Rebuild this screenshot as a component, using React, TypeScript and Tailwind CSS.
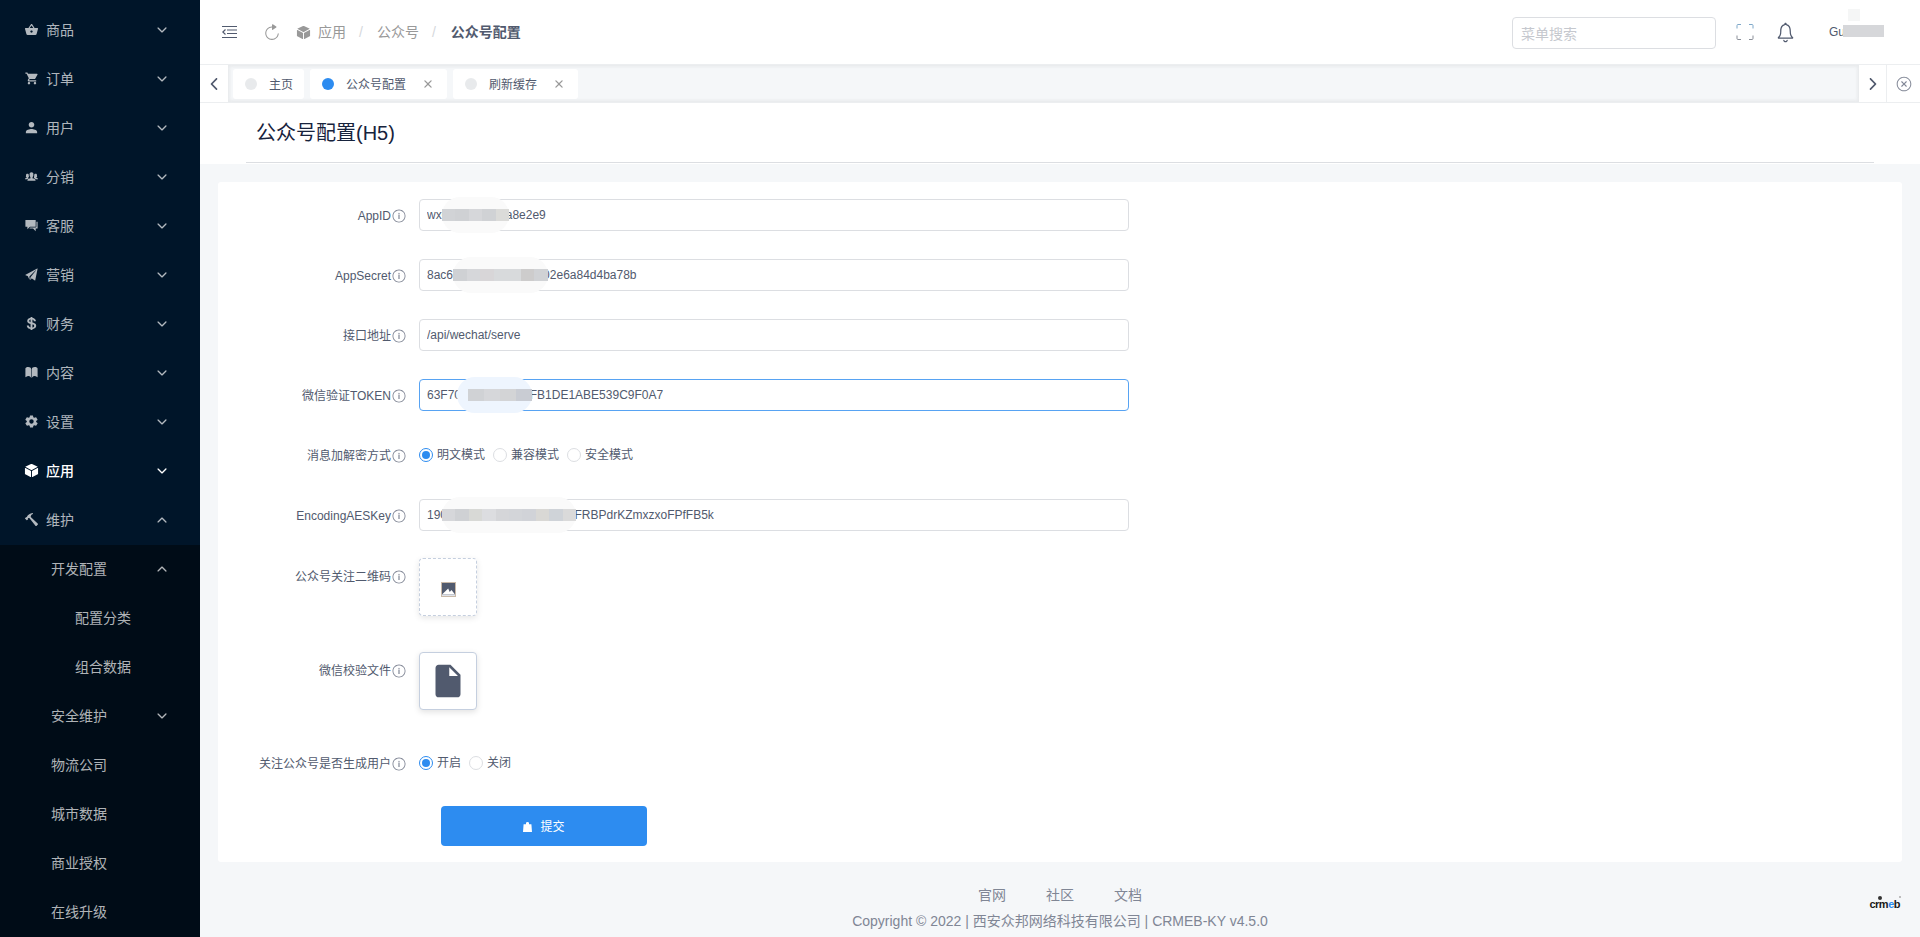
import type { ReactNode } from 'react';
import {
  IoIosArrowBack,
  IoIosArrowDown,
  IoIosArrowForward,
  IoIosArrowUp,
  IoIosBook,
  IoIosClose,
  IoIosCloseCircleOutline,
  IoIosInformationCircleOutline,
  IoIosNotificationsOutline,
  IoIosPaperPlane,
  IoIosPeople,
  IoIosRefresh,
  IoLogoUsd,
  IoMdBasket,
  IoMdCart,
  IoMdChatboxes,
  IoMdCube,
  IoMdDocument,
  IoMdHammer,
  IoMdPerson,
  IoMdSettings,
} from 'react-icons/io';

const topMenu = [
  { name: '商品', icon: IoMdBasket },
  { name: '订单', icon: IoMdCart },
  { name: '用户', icon: IoMdPerson },
  { name: '分销', icon: IoIosPeople },
  { name: '客服', icon: IoMdChatboxes },
  { name: '营销', icon: IoIosPaperPlane },
  { name: '财务', icon: IoLogoUsd },
  { name: '内容', icon: IoIosBook },
  { name: '设置', icon: IoMdSettings },
];

const subMenu = ['物流公司', '城市数据', '商业授权', '在线升级'];

function MenuRow({ icon: Icon, name, active, open }: { icon: typeof IoMdCube; name: string; active?: boolean; open?: boolean }) {
  const Arrow = open ? IoIosArrowUp : IoIosArrowDown;
  return (
    <div className={`flex h-[49px] shrink-0 items-center pb-[2px] pl-[24px] pr-[31px] text-sm ${active ? 'text-white font-medium' : 'text-white/70'}`}>
      <Icon className="mr-[7px] h-[15px] w-[15px]" />
      <span className="flex-1">{name}</span>
      <Arrow className="h-[14px] w-[14px]" />
    </div>
  );
}

function Sidebar() {
  return (
    <aside className="flex h-[937px] w-[200px] shrink-0 flex-col overflow-hidden bg-[#001529] pt-[6px]">
      {topMenu.map((m) => (
        <MenuRow key={m.name} icon={m.icon} name={m.name} />
      ))}
      <MenuRow icon={IoMdCube} name="应用" active />
      <MenuRow icon={IoMdHammer} name="维护" open />
      <div className="flex flex-1 flex-col bg-[#000c17] text-sm text-white/70">
        <div className="flex h-[49px] shrink-0 items-center pb-[2px] pl-[51px] pr-[31px]">
          <span className="flex-1">开发配置</span>
          <IoIosArrowUp className="h-[14px] w-[14px]" />
        </div>
        <div className="flex h-[49px] shrink-0 items-center pb-[2px] pl-[75px]">配置分类</div>
        <div className="flex h-[49px] shrink-0 items-center pb-[2px] pl-[75px]">组合数据</div>
        <div className="flex h-[49px] shrink-0 items-center pb-[2px] pl-[51px] pr-[31px]">
          <span className="flex-1">安全维护</span>
          <IoIosArrowDown className="h-[14px] w-[14px]" />
        </div>
        {subMenu.map((s) => (
          <div key={s} className="flex h-[49px] shrink-0 items-center pb-[2px] pl-[51px]">
            {s}
          </div>
        ))}
      </div>
    </aside>
  );
}

function Header() {
  return (
    <header className="flex h-16 shrink-0 items-center bg-white pl-[22px] pr-[36px]">
      <svg viewBox="0 0 15 14" className="h-[14px] w-[15px] text-[#515a6e]" fill="none" stroke="currentColor" strokeWidth="1.2">
        <path d="M0 1.5h15M5 5h10M5 8.5h10M0 12.5h15" />
        <path d="M3.5 4.5 0.8 7l2.7 2.5" />
      </svg>
      <IoIosRefresh className="ml-[26px] h-[18px] w-[18px] text-[#999]" />
      <IoMdCube className="ml-[15px] h-[15px] w-[15px] text-[#999]" />
      <span className="ml-[7px] text-sm text-[#999]">应用</span>
      <span className="ml-[13px] text-sm text-[#d5d8dc]">/</span>
      <span className="ml-[14px] text-sm text-[#999]">公众号</span>
      <span className="ml-[13px] text-sm text-[#d5d8dc]">/</span>
      <span className="ml-[15px] text-sm font-bold text-[#515a6e]">公众号配置</span>
      <div className="flex-1" />
      <input
        placeholder="菜单搜索"
        className="mt-[2px] h-8 w-[204px] rounded border border-[#dcdee2] px-2 pt-[2px] text-sm outline-none placeholder:text-[#c5c8ce]"
      />
      <svg viewBox="0 0 18 16" className="ml-[20px] h-4 w-[18px]" fill="none" strokeWidth="1">
        <path d="M1 4.5V1.5q0-1 1-1h3M13 .5h3q1 0 1 1v3" stroke="#7fa8c9" />
        <path d="M1 11.5v3q0 1 1 1h3M13 15.5h3q1 0 1-1v-3" stroke="#8a8f99" />
      </svg>
      <IoIosNotificationsOutline className="ml-[19px] h-[25px] w-[25px] text-[#515a6e]" />
      <div className="relative ml-[31px] w-[55px] text-xs text-[#515a6e]">
        Gu
        <div className="absolute left-[14px] top-[1px] h-[12px] w-[41px] bg-[#d6d7da]" />
        <div className="absolute left-[19px] top-[-15px] h-[12px] w-[12px] bg-[#f5f6f6]" />
      </div>
    </header>
  );
}

function Tab({ name, active, closable }: { name: string; active?: boolean; closable?: boolean }) {
  return (
    <div className={`flex h-[30px] items-center rounded-[3px] bg-white pl-[12px] text-xs text-[#515a6e] ${closable ? 'pr-[9px]' : 'pr-[11px]'}`}>
      <span className={`h-3 w-3 rounded-full ${active ? 'bg-[#2d8cf0]' : 'bg-[#e8eaec]'}`} />
      <span className="ml-[12px] pt-[2px]">{name}</span>
      {closable && <IoIosClose className="ml-[12px] h-[20px] w-[20px] text-[#999]" />}
    </div>
  );
}

function TabsBar() {
  return (
    <div className="flex h-[39px] shrink-0 items-stretch border-t border-b border-[#eceef0] bg-white">
      <div className="flex w-[28px] items-center justify-center text-[#515a6e]">
        <IoIosArrowBack className="h-[18px] w-[18px]" />
      </div>
      <div className="flex flex-1 items-center gap-[6px] bg-[#f5f7f9] pl-[5px] shadow-[inset_0_0_3px_2px_rgba(100,100,100,0.08)]">
        <Tab name="主页" />
        <Tab name="公众号配置" active closable />
        <Tab name="刷新缓存" closable />
      </div>
      <div className="flex w-[28px] items-center justify-center border-r border-[#eceef0] text-[#515a6e]">
        <IoIosArrowForward className="h-[18px] w-[18px]" />
      </div>
      <div className="flex w-[33px] items-center justify-center text-[#808695]">
        <IoIosCloseCircleOutline className="h-[18px] w-[18px]" />
      </div>
    </div>
  );
}

function Field({ label, tall, children, className = '' }: { label: string; tall?: boolean; children: ReactNode; className?: string }) {
  return (
    <div className={`flex items-start ${className}`}>
      <label className={`flex w-[201px] shrink-0 items-center justify-end pr-[12px] pt-[2px] text-xs text-[#515a6e] ${tall ? 'h-[36px]' : 'h-8'}`}>
        {label}
        <IoIosInformationCircleOutline className="h-4 w-4 text-[#808695]" />
      </label>
      {children}
    </div>
  );
}

function TextInput({ value, focused, children }: { value: string; focused?: boolean; children?: ReactNode }) {
  return (
    <div className="relative h-8 w-[710px]">
      <input
        readOnly
        value={value}
        className={`h-8 w-full rounded border px-[7px] text-xs text-[#515a6e] outline-none ${focused ? 'border-[#57a3f3]' : 'border-[#dcdee2]'}`}
      />
      {children}
    </div>
  );
}

function Mosaic({ tones }: { tones: string[] }) {
  return (
    <div className="flex h-3 w-full">
      {tones.map((t, i) => (
        <span key={i} className="h-3 flex-1" style={{ backgroundColor: t }} />
      ))}
    </div>
  );
}

function Radio({ label, checked }: { label: string; checked?: boolean }) {
  return (
    <span className="flex items-center gap-[4px] text-xs text-[#515a6e]">
      <span className={`flex h-[14px] w-[14px] items-center justify-center rounded-full border bg-white ${checked ? 'border-[#2d8cf0]' : 'border-[#dcdee2]'}`}>
        {checked && <span className="h-2 w-2 rounded-full bg-[#2d8cf0]" />}
      </span>
      {label}
    </span>
  );
}

function FormCard() {
  return (
    <form className="flex h-[680px] flex-col rounded-[3px] bg-white pt-[17px]">
      <Field label="AppID" className="mb-[28px]">
        <TextInput value="wx00000000r0a8e2e9">
          <div className="absolute left-[23px] top-[-2px] flex h-9 w-[67px] items-center rounded-[18px] bg-[#fafafa]">
            <Mosaic tones={['#d1d3d6', '#cfd1d4', '#d6d7da', '#d0d2d5', '#dbdbd9']} />
          </div>
        </TextInput>
      </Field>
      <Field label="AppSecret" className="mb-[28px]">
        <TextInput value="8ac6M00000000000002e6a84d4ba78b">
          <div className="absolute left-[34px] top-[-2px] flex h-9 w-[95px] items-center rounded-[18px] bg-[#fafafa]">
            <Mosaic tones={['#cfd1d4', '#d6d7da', '#d8d6d8', '#d8dadc', '#d8dadc', '#cdcccc', '#d0d2d5']} />
          </div>
        </TextInput>
      </Field>
      <Field label="接口地址" className="mb-[28px]">
        <TextInput value="/api/wechat/serve" />
      </Field>
      <Field label="微信验证TOKEN" className="mb-[28px]">
        <TextInput value="63F70000000000CFB1DE1ABE539C9F0A7" focused>
          <div className="absolute left-[38px] top-[-2px] flex h-9 w-[75px] items-center rounded-[18px] bg-[#eef5fe] pl-[11px]">
            <Mosaic tones={['#d0d2d5', '#d6d7da', '#d3d4d6', '#c9ccd3']} />
          </div>
        </TextInput>
      </Field>
      <Field label="消息加解密方式" className="mb-[28px]">
        <div className="flex h-8 items-center gap-[8px]">
          <Radio label="明文模式" checked />
          <Radio label="兼容模式" />
          <Radio label="安全模式" />
        </div>
      </Field>
      <Field label="EncodingAESKey" className="mb-[27px]">
        <TextInput value="19000000000000000000AJFRBPdrKZmxzxoFPfFB5k">
          <div className="absolute left-[23px] top-[-2px] flex h-9 w-[134px] items-center rounded-[18px] bg-[#fafafa]">
            <Mosaic tones={['#d6d7da', '#cfd1d4', '#d8d9d6', '#dcdde0', '#d5d6d9', '#d3d5d9', '#d1d3d8', '#d9d8d5', '#cfd3d8', '#dadada']} />
          </div>
        </TextInput>
      </Field>
      <Field label="公众号关注二维码" tall className="mb-[36px]">
        <div className="flex h-[58px] w-[58px] items-center justify-center rounded border border-dashed border-[#c5cfdf] bg-white pt-[4px] shadow-[0_2px_6px_rgba(0,0,0,0.1)]">
          <svg viewBox="0 0 15 15" className="h-[15px] w-[15px]">
            <rect width="15" height="15" fill="#c9b9a8" />
            <rect x="1" y="1" width="13" height="13" fill="#515a6e" />
            <path d="M1 12.5h13L10.5 8 8.7 10 7.2 6.5z" fill="#fff" />
            <rect x="1" y="12.5" width="13" height="1.5" fill="#dfe2e8" />
          </svg>
        </div>
      </Field>
      <Field label="微信校验文件" tall className="mb-[37px]">
        <div className="flex h-[58px] w-[58px] items-center justify-center rounded border border-[#c5cfdf] bg-white shadow-[0_2px_6px_rgba(0,0,0,0.12)]">
          <IoMdDocument className="h-[40px] w-[40px] text-[#515a6e]" />
        </div>
      </Field>
      <Field label="关注公众号是否生成用户" className="mb-[27px]">
        <div className="flex h-8 items-center gap-[8px]">
          <Radio label="开启" checked />
          <Radio label="关闭" />
        </div>
      </Field>
      <div className="pl-[223px]">
        <button type="button" className="flex h-10 w-[206px] items-center justify-center gap-[8px] rounded bg-[#2d8cf0] pt-[2px] text-xs text-white">
          <svg viewBox="0 0 9 10" className="h-[10px] w-[9px]" fill="white">
            <path d="M3 2.2V1q0-1 1.5-1T6 1v1.2h2.4L9 10H0l.6-7.8z" />
          </svg>
          提交
        </button>
      </div>
    </form>
  );
}

export default function App() {
  return (
    <div className="flex h-[937px] w-[1920px] overflow-hidden bg-[#f5f7f9] font-['Liberation_Sans','Noto_Sans_CJK_SC',sans-serif]">
      <Sidebar />
      <main className="relative flex min-w-0 flex-1 flex-col">
        <Header />
        <TabsBar />
        <div className="h-[61px] shrink-0 bg-white">
          <h1 className="mx-[46px] flex h-[60px] items-center border-b border-[#dcdee2] pl-[10px] text-xl text-[#17233d]">
            公众号配置(H5)
          </h1>
        </div>
        <div className="px-[18px] pt-[18px]">
          <FormCard />
        </div>
        <div className="mt-[23px] flex justify-center gap-[40px] text-sm text-[#808695]">
          <span>官网</span>
          <span>社区</span>
          <span>文档</span>
        </div>
        <div className="mt-[6px] text-center text-sm text-[#808695]">Copyright © 2022 | 西安众邦网络科技有限公司 | CRMEB-KY v4.5.0</div>
        <div className="absolute bottom-[27px] right-[20px] text-[11px] font-bold leading-none tracking-[-0.5px] text-[#1a1a1a]">
          <span className="absolute left-[9px] top-[-3px] h-[4px] w-[4px] rounded-full bg-[#333]" />
          <span className="absolute right-[-1px] top-[-3px] h-[2px] w-[2px] rounded-full bg-[#aaa]" />
          crm<span className="text-[#2d8cf0]">e</span>b
        </div>
      </main>
    </div>
  );
}
